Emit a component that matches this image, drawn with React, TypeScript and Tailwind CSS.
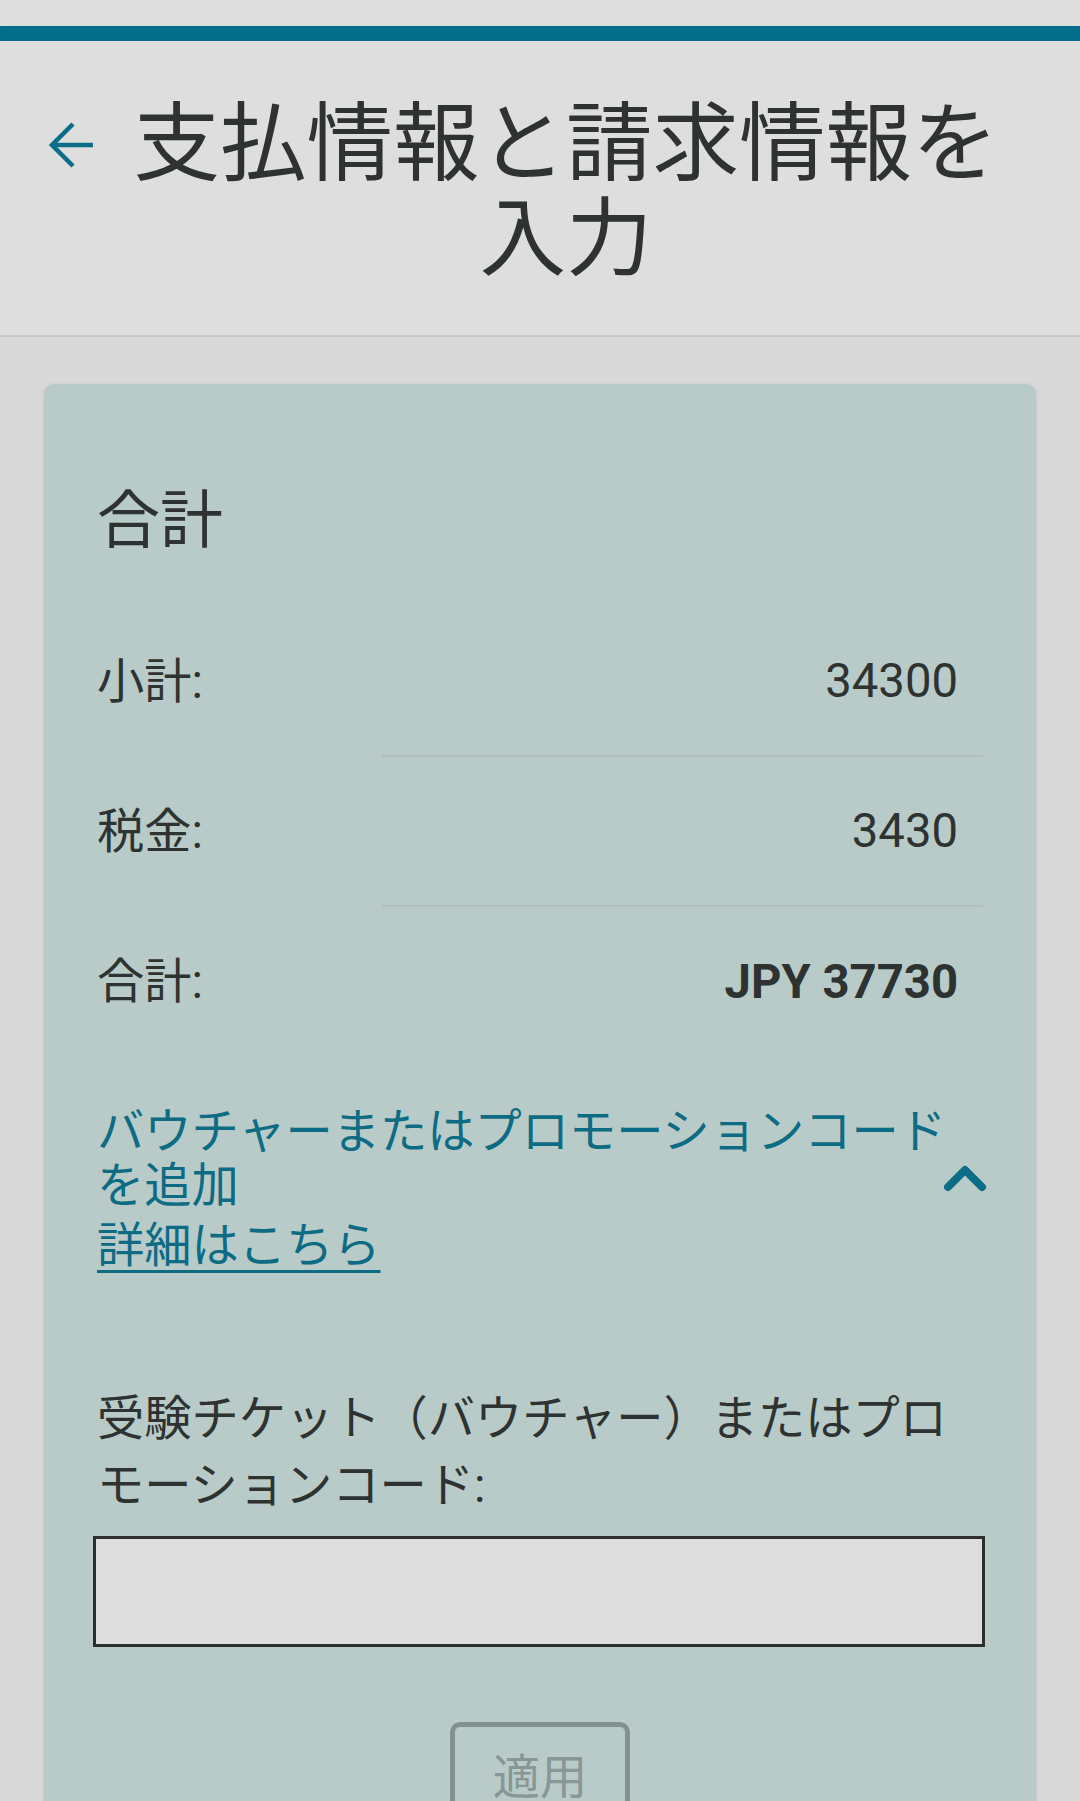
const font = { fontFamily: 'Roboto, "Noto Sans CJK JP", sans-serif' }

function BackArrow() {
  return (
    <svg width="48" height="48" viewBox="0 0 48 48" fill="none" stroke="#0b6d87" strokeWidth="4.5" strokeLinecap="butt" strokeLinejoin="miter">
      <path d="M45 24H4" />
      <path d="M25 3L4 24l21 21" />
    </svg>
  )
}

function ChevronUp() {
  return (
    <svg width="44" height="30" viewBox="0 0 44 30" fill="none" stroke="#0b6d87" strokeWidth="8" strokeLinecap="round" strokeLinejoin="round">
      <path d="M5 24L22 7l17 17" />
    </svg>
  )
}

const rows = [
  { label: '小計:', value: '34300', bold: false },
  { label: '税金:', value: '3430', bold: false },
  { label: '合計:', value: 'JPY 37730', bold: true },
]

export default function App() {
  return (
    <div className="min-h-screen bg-[#d9d9d9] text-[#2e3231]" style={font}>
      <div className="h-[26px] bg-[#dedede]" />
      <div className="h-[15px] bg-[#056e8a] shadow-[0_3px_3px_rgba(120,160,180,0.35)]" />

      <header className="flex items-start bg-[#dedede] pl-[48px] pr-[44px] pt-[56px] pb-[48px] border-b-[2px] border-[#c7c7c7]">
        <div className="w-[48px] h-[95px] flex items-center">
          <BackArrow />
        </div>
        <h1 className="flex-1 text-center text-[86.5px] leading-[95px] font-normal text-[#2f3232]">
          支払情報と請求情報を入力
        </h1>
      </header>

      <main className="px-[44px] pt-[47px] pb-[60px]">
        <section className="rounded-[10px] bg-[#b8cbc8] shadow-[0_1px_4px_rgba(0,0,0,0.12)] px-[53px] pt-[99px] pb-[80px]">
          <h2 className="text-[63px] leading-[76px] font-normal">合計</h2>

          <div className="mt-[48px]">
            {rows.map((r, i) => (
              <div key={r.label} className="flex h-[150px]">
                <div className="w-[285px] flex items-center text-[47.25px] leading-[66px]">{r.label}</div>
                <div
                  className={
                    'flex-1 flex items-center justify-end pr-[25px] text-[47.25px] leading-[66px] ' +
                    (i < 2 ? 'border-b-[2px] border-[#aebfbc]' : '') +
                    (r.bold ? ' font-bold' : '')
                  }
                >
                  {r.value}
                </div>
              </div>
            ))}
          </div>

          <div className="relative mt-[48px]">
            <div className="text-[#0d6c84] text-[47.25px] leading-[54px]">
              バウチャーまたはプロモーションコードを追加
            </div>
            <a className="block text-[#0d6c84] text-[47.25px] leading-[66px] underline underline-offset-[8px] decoration-[3px]">
              詳細はこちら
            </a>
            <div className="absolute right-[-4px] top-[58px]">
              <ChevronUp />
            </div>
          </div>

          <label className="block mt-[107px] text-[47.25px] leading-[67px]">
            受験チケット（バウチャー）またはプロモーションコード:
          </label>
          <input
            type="text"
            className="block mt-[16px] h-[111px] -ml-[4px] bg-[#dddddd] border-[3px] border-[#2b2f2e] outline-none"
            style={{ width: 'calc(100% + 6px)' }}
          />

          <div className="flex justify-center mt-[75px]">
            <button className="rounded-[10px] border-[5px] border-[#80918e] px-[38px] py-[18px] text-[47.25px] leading-[66px] text-[#889795]">
              適用
            </button>
          </div>
        </section>
      </main>
    </div>
  )
}
